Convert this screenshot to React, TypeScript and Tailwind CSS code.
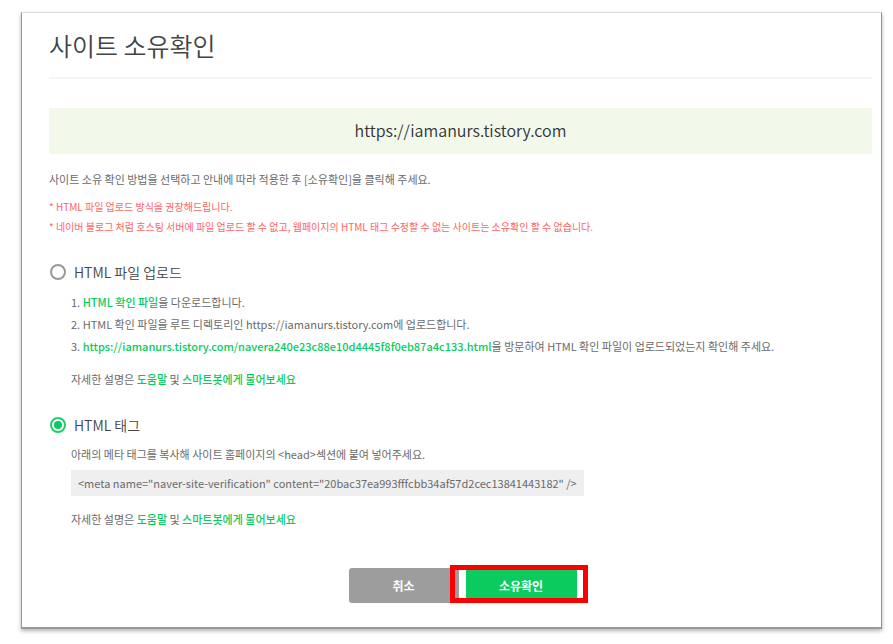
import { useState } from "react";
import type { ReactNode } from "react";

const SITE = "https://iamanurs.tistory.com";

function GreenLink({ children }: { children: ReactNode }) {
  return (
    <a href="#" className="font-medium text-[#08cb60]">
      {children}
    </a>
  );
}

function HelpLine() {
  return (
    <p>
      자세한 설명은 <GreenLink>도움말</GreenLink> 및 <GreenLink>스마트봇에게 물어보세요</GreenLink>
    </p>
  );
}

function Method({
  id,
  label,
  checked,
  onSelect,
  children,
}: {
  id: string;
  label: string;
  checked: boolean;
  onSelect: () => void;
  children: ReactNode;
}) {
  return (
    <section>
      <div className="flex h-6 items-center gap-2 pl-px">
        <input
          type="radio"
          id={id}
          name="method"
          checked={checked}
          onChange={onSelect}
          className="grid size-4 appearance-none place-content-center rounded-full border-2 border-[#999] bg-white before:size-2 before:rounded-full checked:border-[#1fcf6c] checked:before:bg-[#08cb60]"
        />
        <label htmlFor={id} className="text-sm font-[350] text-[#444]">
          {label}
        </label>
      </div>
      <div className="pl-[22px]">{children}</div>
    </section>
  );
}

export default function App() {
  const [method, setMethod] = useState("tag");

  return (
    <div className="bg-white px-[11px] pt-3 pb-4 pl-[21px] font-['Noto_Sans_CJK_KR',sans-serif] text-[11px] leading-[22px] text-[#6a6a6a]">
      <main className="border border-t-[#dedede] border-r-[#909090] border-b-2 border-b-[#999] border-l-[#999] bg-white pt-4 pr-[9px] pb-6 pl-[27px] shadow-[0_2px_4px_rgba(0,0,0,0.3)]">
        <h1 className="border-b-2 border-[#f6f6f6] pb-4 text-[25px] leading-8 font-[350] text-[#444]">
          사이트 소유확인
        </h1>

        <p className="mt-[29px] bg-[#f2f8ea] pt-[11px] pb-[13px] text-center text-base leading-[22px] font-[350] text-[#333]">
          {SITE}
        </p>

        <p className="mt-3.5">
          사이트 소유 확인 방법을 선택하고 안내에 따라 적용한 후 [소유확인]을 클릭해 주세요.
        </p>
        <div className="mt-[7px] text-[10px] leading-5 text-[#ff6464]">
          <p>* HTML 파일 업로드 방식을 권장해드립니다.</p>
          <p>
            * 네이버 블로그 처럼 호스팅 서버에 파일 업로드 할 수 없고, 웹페이지의 HTML 태그 수정할 수 없는 사이트는
            소유확인 할 수 없습니다.
          </p>
        </div>

        <form className="mt-[23px]" onSubmit={(e) => e.preventDefault()}>
          <Method
            id="method-file"
            label="HTML 파일 업로드"
            checked={method === "file"}
            onSelect={() => setMethod("file")}
          >
            <ol className="mt-[7px] mb-[11px]">
              <li>
                1. <GreenLink>HTML 확인 파일</GreenLink>을 다운로드합니다.
              </li>
              <li>2. HTML 확인 파일을 루트 디렉토리인 {SITE}에 업로드합니다.</li>
              <li>
                3. <GreenLink>{SITE}/navera240e23c88e10d4445f8f0eb87a4c133.html</GreenLink>을 방문하여 HTML 확인
                파일이 업로드되었는지 확인해 주세요.
              </li>
            </ol>
            <HelpLine />
          </Method>

          <div className="mt-[23px]">
            <Method
              id="method-tag"
              label="HTML 태그"
              checked={method === "tag"}
              onSelect={() => setMethod("tag")}
            >
              <p className="mt-1.5">
                아래의 메타 태그를 복사해 사이트 홈페이지의 &lt;head&gt;섹션에 붙여 넣어주세요.
              </p>
              <code className="mt-[5px] mb-3 block w-fit bg-[#efefef] px-[7px] py-[2px] font-['Noto_Sans_CJK_KR',sans-serif] text-[11px]">
                {'<meta name="naver-site-verification" content="20bac37ea993fffcbb34af57d2cec13841443182" />'}
              </code>
              <HelpLine />
            </Method>
          </div>

          <div className="mt-[38px] flex justify-center gap-[7px] pl-1 text-[12px] font-bold text-white">
            <button type="button" className="h-[35px] w-[110px] rounded-[3px] bg-[#9d9d9d]">
              취소
            </button>
            <div className="relative">
              <button type="submit" className="h-[35px] w-[111px] rounded-[3px] bg-[#0bcb5f]">
                소유확인
              </button>
              <span className="pointer-events-none absolute -top-[3px] -right-[11px] bottom-0 -left-4 border-5 border-[#fb0000]" />
            </div>
          </div>
        </form>
      </main>
    </div>
  );
}
